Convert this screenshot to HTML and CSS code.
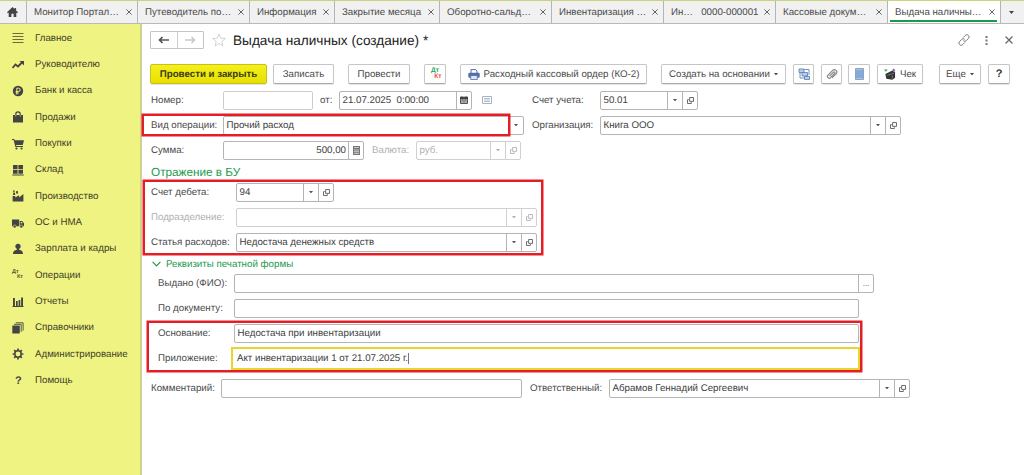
FILE: index.html
```html
<!DOCTYPE html>
<html lang="ru">
<head>
<meta charset="utf-8">
<title>Выдача наличных (создание)</title>
<link rel="stylesheet" href="styles.css">
</head>
<body>
<svg class="defs" width="0" height="0">
  <symbol id="open" viewBox="0 0 8 8"><path d="M3 .6h4.400v4.400H3zM2 3H.6v4.400h4.400V6" fill="none" stroke="currentColor" stroke-width="1"/></symbol>
  <symbol id="down" viewBox="0 0 5 3"><path d="M0 0h5L2.500 3z" fill="currentColor"/></symbol>
  <symbol id="x" viewBox="0 0 6 6"><path d="M.4.400l5.200 5.200M5.600.400L.4 5.600" fill="none" stroke="currentColor" stroke-width=".9"/></symbol>
</svg>
<div class="app">
  <nav class="tabs">
    <div class="tab home"><svg width="11" height="10" viewBox="0 0 11 10"><path d="M5.500 0L0 5.300l.9.900.8-.7V10h2.700V6.700h2.200V10h2.700V5.500l.8.700.9-.9-1.900-1.800V.9H7.700v1.200z" fill="#444"/></svg></div>
    <div class="tab w1"><span>Монитор Портал…</span><svg class="tx"><use href="#x"/></svg></div>
    <div class="tab w2"><span>Путеводитель по…</span><svg class="tx"><use href="#x"/></svg></div>
    <div class="tab w3"><span>Информация</span><svg class="tx"><use href="#x"/></svg></div>
    <div class="tab w4"><span>Закрытие месяца</span><svg class="tx"><use href="#x"/></svg></div>
    <div class="tab w5"><span>Оборотно-сальд…</span><svg class="tx"><use href="#x"/></svg></div>
    <div class="tab w5"><span>Инвентаризация …</span><svg class="tx"><use href="#x"/></svg></div>
    <div class="tab w5"><span>Ин…&nbsp;&nbsp; 0000-000001</span><svg class="tx"><use href="#x"/></svg></div>
    <div class="tab w5"><span>Кассовые докум…</span><svg class="tx"><use href="#x"/></svg></div>
    <div class="tab w6 active"><span>Выдача наличны…</span><svg class="tx"><use href="#x"/></svg></div>
    <div class="tab more"><svg width="5" height="3"><use href="#down"/></svg></div>
  </nav>
  <div class="work">
    <aside class="side">
      <div class="item"><svg viewBox="0 0 12 12"><path d="M.5 1.500h11M.5 4.500h11M.5 7.500h11M.5 10.500h11" stroke="#6b6c3c" stroke-width="1"/></svg>Главное</div>
      <div class="item"><svg viewBox="0 0 12 12"><path d="M.5 9l3-3.500 2.500 2L10 3.500" fill="none" stroke="#444" stroke-width="1.800"/><path d="M7.500 2H12v4.500z" fill="#444"/></svg>Руководителю</div>
      <div class="item"><svg viewBox="0 0 12 12"><circle cx="6" cy="6" r="5.200" fill="#444"/><path d="M4.800 9.500V3.200h1.700a1.600 1.600 0 0 1 0 3.300H3.700M3.700 8h3" fill="none" stroke="#eff382" stroke-width="1"/></svg>Банк и касса</div>
      <div class="item"><svg viewBox="0 0 12 12"><path d="M1 4h10v7.500H1z" fill="#444"/><path d="M3.800 5.500V3a2.200 2.200 0 0 1 4.400 0v2.500" fill="none" stroke="#444" stroke-width="1.200"/><path d="M3.800 4v1.500M8.200 4v1.500" stroke="#eff382" stroke-width=".7"/></svg>Продажи</div>
      <div class="item"><svg viewBox="0 0 12 12"><path d="M0 1h2.300l.4 1.300H12L10.800 7H4l.3 1H11v1H3.400L1.600 2.100H0z" fill="#444"/><circle cx="4.500" cy="10.500" r="1.100" fill="#444"/><circle cx="9.500" cy="10.500" r="1.100" fill="#444"/></svg>Покупки</div>
      <div class="item"><svg viewBox="0 0 12 12"><path d="M1 1h4.600v4H1zM6.400 1H11v4H6.400zM1 5.800h4.600v4H1zM6.400 5.800H11v4H6.400zM.3 10.400h11.400v1H.3z" fill="#444"/></svg>Склад</div>
      <div class="item"><svg viewBox="0 0 12 12"><path d="M.6 11.500V6h2.700v1.600L7 5.200v2.200l4.400-3.300v7.400zM1 5l.3-2.500h1.600L3.200 5zM4 3.500L4.200 1h1.600l.3 2.500zM1 .5h1.800v1.200H1z" fill="#444"/></svg>Производство</div>
      <div class="item"><svg viewBox="0 0 12 12"><path d="M0 2.500h7.200v6.800H0zM7.800 4h2.400L12 6.300v3H7.800z" fill="#444"/><path d="M8.700 4.900h1.200l.9 1.300H8.700z" fill="#eff382"/><g fill="#444" stroke="#eff382" stroke-width=".6"><circle cx="2.700" cy="9.500" r="1.500"/><circle cx="9.300" cy="9.500" r="1.500"/></g></svg>ОС и НМА</div>
      <div class="item"><svg viewBox="0 0 12 12"><circle cx="6" cy="3.300" r="2.600" fill="#444"/><path d="M4.900 5h2.200v1.700c2.500.3 3.900 1.300 3.900 4.300H1C1 8 2.400 7 4.900 6.700z" fill="#444"/></svg>Зарплата и кадры</div>
      <div class="item"><span class="dk dark"><b>Дт</b><b>Кт</b></span>Операции</div>
      <div class="item"><svg viewBox="0 0 12 12"><path d="M1 2h1.900v8H1zM4 5h1.700v5H4zM6.600 4h1.700v6H6.600zM9.100 1.500H11V10H9.100zM.5 10h11v1H.5z" fill="#444"/></svg>Отчеты</div>
      <div class="item"><svg viewBox="0 0 12 12"><path d="M.3 3.500h7.500v8H.3z" fill="#444"/><path d="M2 2.300h7.200v7.500M3.800.8h7.300V8.600" fill="none" stroke="#444" stroke-width=".9"/></svg>Справочники</div>
      <div class="item"><svg viewBox="0 0 12 12"><circle cx="6" cy="6" r="3.200" fill="none" stroke="#444" stroke-width="1.500"/><path d="M6 .6v2M6 9.400v2M.6 6h2M9.400 6h2M2.200 2.200l1.300 1.300M8.500 8.500l1.300 1.300M2.200 9.800l1.300-1.300M8.500 3.500l1.300-1.300" stroke="#444" stroke-width="1.700"/></svg>Администрирование</div>
      <div class="item"><b class="q">?</b>Помощь</div>
    </aside>
    <main class="main">
      <header class="head">
        <div class="nav"><span><svg width="11" height="8" viewBox="0 0 11 8"><path d="M11 4H2M4.500 1L1.500 4l3 3" fill="none" stroke="#555" stroke-width="1.700"/></svg></span><span><svg width="11" height="8" viewBox="0 0 11 8"><path d="M0 4h9M6.500 1l3 3-3 3" fill="none" stroke="#c8c8c8" stroke-width="1.500"/></svg></span></div>
        <svg class="star" width="14" height="14" viewBox="0 0 14 14"><path d="M7 .9l1.700 4.300 4.600.3-3.500 3 1.100 4.500L7 10.500 3.100 13l1.100-4.500-3.500-3 4.600-.3z" fill="none" stroke="#c9ced3" stroke-width=".9"/></svg>
        <h1>Выдача наличных (создание) *</h1>
        <svg class="link" width="12" height="12" viewBox="0 0 12 12"><path d="M5.300 3.400l1.900-1.900a2 2 0 0 1 3.200 0 2 2 0 0 1 0 3L8.300 6.600a2 2 0 0 1-3 0M6.700 8.600l-1.900 1.900a2 2 0 0 1-3.200 0 2 2 0 0 1 0-3l2.100-2.100a2 2 0 0 1 3 0" fill="none" stroke="#777" stroke-width="1"/></svg>
        <svg class="dots" width="3" height="9" viewBox="0 0 3 9"><path d="M.5 0h2v2h-2zM.5 3.500h2v2h-2zM.5 7h2v2h-2z" fill="#777"/></svg>
        <svg class="close" width="8" height="8"><use href="#x"/></svg>
      </header>
      <div class="bar">
        <button class="btn primary b1">Провести и закрыть</button>
        <button class="btn b2">Записать</button>
        <button class="btn b3">Провести</button>
        <button class="btn b4"><span class="dk color"><b>Дт</b><b>Кт</b></span></button>
        <button class="btn b5"><svg width="12" height="11" viewBox="0 0 12 11"><path d="M3 4V.6h4.500L9 2v2" fill="#fff" stroke="#526caf" stroke-width="1"/><rect x=".3" y="3.800" width="11.400" height="5" rx="1.200" fill="#526caf"/><path d="M2.700 6.500h6.600v4H2.700z" fill="#dfe6f5" stroke="#526caf" stroke-width=".8"/></svg><span>Расходный кассовый ордер (КО-2)</span></button>
        <button class="btn b6"><span>Создать на основании</span><svg class="bd"><use href="#down"/></svg></button>
        <button class="btn b7"><svg width="12" height="12" viewBox="0 0 12 12"><path d="M1 1h5v3.500H1zM4 4.500h5.500V8H4zM6.500 8.500h5v3h-5z" fill="#b9cee8" stroke="#5f88ba" stroke-width=".9"/><path d="M2 4.500V10h4.500M6 1.500h5V7" fill="none" stroke="#5f88ba" stroke-width=".9"/></svg></button>
        <button class="btn b8"><svg width="12" height="12" viewBox="0 0 12 12"><path d="M3.500 8.200l4-4a.8.800 0 0 1 1.200 1.200l-4.200 4.300a1.700 1.700 0 0 1-2.500-2.500l4.700-4.800a2.300 2.300 0 0 1 3.400 3.400L6 9.900" fill="none" stroke="#888" stroke-width="1.200"/></svg></button>
        <button class="btn b9"><svg width="9" height="12" viewBox="0 0 9 12"><path d="M.5.500h8v11h-8z" fill="#a5c1e3" stroke="#6d94c4" stroke-width=".8"/><path d="M1 3h7M1 5h7M1 7h7M1 9h7" stroke="#5d86b9" stroke-width=".8"/></svg></button>
        <button class="btn b10"><svg width="12" height="13" viewBox="0 0 13 13"><path d="M1.500 6l7-3.500 3.500 1v6.500l-3 2.200-6.500-1z" fill="#333"/><path d="M3.500 7.500L8 6l3-1M9 11V7.500" stroke="#999" stroke-width=".7" fill="none"/><path d="M0 1h4L2 3.500z" fill="#1aa85a"/><path d="M8.500 2.500h4L10.500 0z" fill="#7646c0"/></svg><span>Чек</span></button>
        <button class="btn b11"><span>Еще</span><svg class="bd"><use href="#down"/></svg></button>
        <button class="btn b12">?</button>
      </div>
      <form class="form">
        <div class="row">
          <label class="l1">Номер:</label><div class="field f-num"></div>
          <label class="l-ot">от:</label><div class="field f-date"><span>21.07.2025&nbsp; 0:00:00</span><i><svg width="8" height="8" viewBox="0 0 8 8"><path d="M.5 1.500h7v6h-7z" fill="#bbb" stroke="#555"/><path d="M0 1h8v2H0zM2 0v1M6 0v1" fill="#444" stroke="#444" stroke-width=".6"/><path d="M1 5h6M3 3v4M5 3v4" stroke="#666" stroke-width=".5"/></svg></i></div>
          <svg class="list" width="10" height="8" viewBox="0 0 10 8"><path d="M.5.500h9v7h-9z" fill="#fff" stroke="#a9b2bd"/><path d="M2 2.500h6M2 4h6M2 5.500h6" stroke="#9cb0c8" stroke-width=".8"/></svg>
          <label class="l-acc">Счет учета:</label><div class="field f-acc"><span>50.01</span><i><svg class="dn"><use href="#down"/></svg></i><i><svg class="op"><use href="#open"/></svg></i></div>
        </div>
        <div class="row">
          <label class="l1">Вид операции:</label><div class="field f-kind"><span>Прочий расход</span><i><svg class="dn"><use href="#down"/></svg></i></div>
          <label class="l-org">Организация:</label><div class="field f-org"><span>Книга ООО</span><i><svg class="dn"><use href="#down"/></svg></i><i><svg class="op"><use href="#open"/></svg></i></div>
        </div>
        <div class="row">
          <label class="l1">Сумма:</label><div class="field f-sum"><span>500,00</span><i><svg width="7" height="9" viewBox="0 0 7 9"><path d="M0 0h7v9H0z" fill="#777"/><path d="M1 1.500h5M1 4h5M1 5.700h5M1 7.400h5" stroke="#ddd" stroke-width=".8"/></svg></i></div>
          <label class="l-cur off">Валюта:</label><div class="field f-cur off"><span>руб.</span><i><svg class="dn"><use href="#down"/></svg></i><i><svg class="op"><use href="#open"/></svg></i></div>
        </div>
        <h2>Отражение в БУ</h2>
        <div class="row">
          <label class="l2">Счет дебета:</label><div class="field f-deb"><span>94</span><i><svg class="dn"><use href="#down"/></svg></i><i><svg class="op"><use href="#open"/></svg></i></div>
        </div>
        <div class="row">
          <label class="l2 off">Подразделение:</label><div class="field f-dep off"><span></span><i><svg class="dn"><use href="#down"/></svg></i><i><svg class="op"><use href="#open"/></svg></i></div>
        </div>
        <div class="row">
          <label class="l2">Статья расходов:</label><div class="field f-dep"><span>Недостача денежных средств</span><i><svg class="dn"><use href="#down"/></svg></i><i><svg class="op"><use href="#open"/></svg></i></div>
        </div>
        <h3><svg width="9" height="6" viewBox="0 0 9 6"><path d="M.6.800l3.900 4 3.900-4" fill="none" stroke="#1d9b4e" stroke-width="1.200"/></svg>Реквизиты печатной формы</h3>
        <div class="row sub">
          <label class="l3">Выдано (ФИО):</label><div class="field f-fio"><span></span><i class="ell">...</i></div>
        </div>
        <div class="row sub">
          <label class="l3">По документу:</label><div class="field f-doc"></div>
        </div>
        <div class="row sub">
          <label class="l3">Основание:</label><div class="field f-doc"><span>Недостача при инвентаризации</span></div>
        </div>
        <div class="row sub">
          <label class="l3">Приложение:</label><div class="field f-app"><span>Акт инвентаризации 1 от 21.07.2025 г.</span><em></em></div>
        </div>
        <div class="row last">
          <label class="l4">Комментарий:</label><div class="field f-com"></div>
          <label class="l-resp">Ответственный:</label><div class="field f-resp"><span>Абрамов Геннадий Сергеевич</span><i><svg class="dn"><use href="#down"/></svg></i><i><svg class="op"><use href="#open"/></svg></i></div>
        </div>
      </form>
      <div class="mark m1"></div>
      <div class="mark m2"></div>
      <div class="mark m3"></div>
    </main>
  </div>
</div>
</body>
</html>
```
FILE: styles.css
```css
* { box-sizing: border-box; }
body { margin: 0; font: 9.72px "Liberation Sans", Arial, sans-serif; color: #4a4a4a; background: #fff; text-rendering: geometricPrecision; }
svg { display: block; flex: none; }
.defs { position: absolute; }
.app { width: 1024px; height: 475px; display: flex; flex-direction: column; overflow: hidden; }

.tabs { height: 24px; display: flex; background: #f1f1f1; border-top: 1px solid #cdd17c; border-bottom: 1px solid #b9b9b9; }
.tab { flex: none; display: flex; align-items: center; justify-content: space-between; padding: 0 5px 0 7px; border-right: 1px solid #b5b5b5; white-space: nowrap; }
.tx { width: 6px; height: 6px; color: #555; }
.home { width: 27px; padding: 0 8px 0 7px; }
.w1 { width: 111px; }
.w2 { width: 112px; }
.w3 { width: 85px; }
.w4 { width: 105px; }
.w5 { width: 112px; }
.w6 { width: 113px; }
.active { background: #fff; position: relative; }
.active::after { content: ""; position: absolute; left: 2px; right: 3px; bottom: 1px; height: 2px; background: #189a4e; }
.more { border: 0; padding: 0 8px; color: #444; }

.work { flex: 1; display: flex; min-height: 0; }
.side { width: 142px; background: #eff382; border-right: 2px solid #cfd18c; padding-top: 1px; }
.item { height: 26.35px; display: flex; align-items: center; padding-left: 12px; color: #3f4028; white-space: nowrap; }
.item > svg { width: 12px; height: 12px; margin-right: 11px; }
.q { width: 23px; padding-left: 3px; font-size: 11px; color: #444; }
.dk { display: flex; flex-direction: column; font-size: 5.500px; line-height: 5px; width: 11px; }
.dk b:last-child { align-self: flex-end; }
.dark { color: #55562f; margin-right: 12px; }
.color { font-size: 6.500px; line-height: 6px; width: 13px; color: #26a65b; }
.color b:last-child { color: #e8503a; }

.main { flex: 1; position: relative; padding: 7px 0 0 8px; }
.head { display: flex; align-items: center; height: 18px; }
.nav { display: flex; width: 54px; height: 18px; border: 1px solid #c4c4c4; border-radius: 1px; }
.nav span { flex: 1; display: flex; align-items: center; justify-content: center; }
.nav span + span { border-left: 1px solid #ccc; }
.star { margin: 0 7px 0 8px; }
h1 { font-size: 13.650px; font-weight: 400; color: #222; margin: 0; white-space: nowrap; }
.link { margin-left: auto; color: #777; }
.dots { margin-left: 15px; }
.close { margin: 0 11px 0 17px; color: #666; }

.bar { display: flex; margin-top: 15px; height: 20px; }
.btn { flex: none; height: 20px; padding: 0; display: flex; align-items: center; justify-content: center; gap: 4px; font: 9.720px "Liberation Sans", Arial, sans-serif; text-rendering: geometricPrecision; color: #4a4a4a; background: #fff; border: 1px solid #c6c6c6; border-bottom-color: #aaa; border-radius: 2px; white-space: nowrap; box-shadow: 0 1px 1px #e5e5e5; }
.bd { width: 4px; height: 2.400px; margin-top: 1px; }
.primary { background: linear-gradient(#f5f01c, #e8e000); border-color: #c8c018; color: #3c3c14; font-weight: 700; }
.b1 { width: 117px; }
.b2 { width: 61px; margin-left: 6px; }
.b3 { width: 62px; margin-left: 14px; }
.b4 { width: 22px; margin-left: 14px; }
.b5 { width: 187px; margin-left: 14px; }
.b6 { width: 125px; margin-left: 14px; }
.b7 { width: 21px; margin-left: 7px; }
.b8 { width: 21px; margin-left: 7px; }
.b9 { width: 22px; margin-left: 6px; }
.b10 { width: 46px; margin-left: 7px; }
.b11 { width: 42px; margin-left: 16px; }
.b12 { width: 22px; margin-left: 7px; font-size: 11px; font-weight: 700; color: #333; }

.form { margin-top: 7px; padding-left: 1px; }
.row { display: flex; align-items: center; height: 18px; margin-bottom: 7px; }
label { flex: none; white-space: nowrap; }
.field { flex: none; display: flex; height: 19px; border: 1px solid #b4b4b4; border-radius: 2px; background: #fff; white-space: nowrap; color: #404040; }
.field span { flex: 1; padding-left: 2.500px; line-height: 18px; }
.field i { width: 15px; border-left: 1px solid #b4b4b4; display: flex; align-items: center; justify-content: center; font-style: normal; color: #555; }
.dn { width: 4px; height: 2.500px; }
.op { width: 7px; height: 7px; }
.off, .field.off, .off i { color: #b0b0b0; }
.field.off, .off i { border-color: #d0d0d0; }
.l1 { width: 72px; }
.l2 { width: 85px; }
.l3 { width: 76px; }
.l4 { width: 70px; }
.l-ot { width: 19px; margin-left: 7px; }
.l-acc { width: 68px; margin-left: 40px; }
.l-org { width: 68px; margin-left: 8px; }
.l-cur { width: 44px; margin-left: 8px; }
.l-resp { width: 79px; margin-left: 8px; }
.f-num { width: 90px; border-color: #ccc; }
.f-date { width: 133px; }
.list { margin-left: 10px; }
.f-acc { width: 98px; }
.f-kind { width: 301px; }
.f-org { width: 301px; }
.f-sum { width: 141px; }
.f-sum span { text-align: right; padding-right: 2px; }
.f-cur { width: 105px; }
h2 { height: 17px; margin: 0; line-height: 14px; font-size: 11.750px; font-weight: 400; color: #1d9b4e; }
.f-deb { width: 98px; }
.f-dep { width: 301px; }
h3 { display: flex; align-items: center; gap: 5px; height: 12px; margin: 0 0 4px; padding-left: 1px; font-size: 9.750px; font-weight: 400; color: #1d9b4e; }
.sub { padding-left: 7px; }
.f-fio { width: 640px; }
.f-doc { width: 625px; }
.f-app { width: 629px; height: 23px; margin-left: -3px; border: 2px solid #ead42e; border-radius: 0; }
.f-app span { flex: none; padding-left: 4px; line-height: 19px; }
.f-app em { width: 1px; height: 11px; margin-top: 4px; background: #777; }
.ell { font-size: 8px; }
.last { margin-top: 12px; }
.f-com { width: 301px; }
.f-resp { width: 301px; }

.mark { position: absolute; border: 2px solid #e41e26; box-shadow: 0 0 0 .5px #e41e26; pointer-events: none; }
.m1 { left: 0; top: 90px; width: 368px; height: 22px; }
.m2 { left: 1px; top: 156px; width: 400px; height: 75px; }
.m3 { left: 5px; top: 297px; width: 715px; height: 51px; }
```
